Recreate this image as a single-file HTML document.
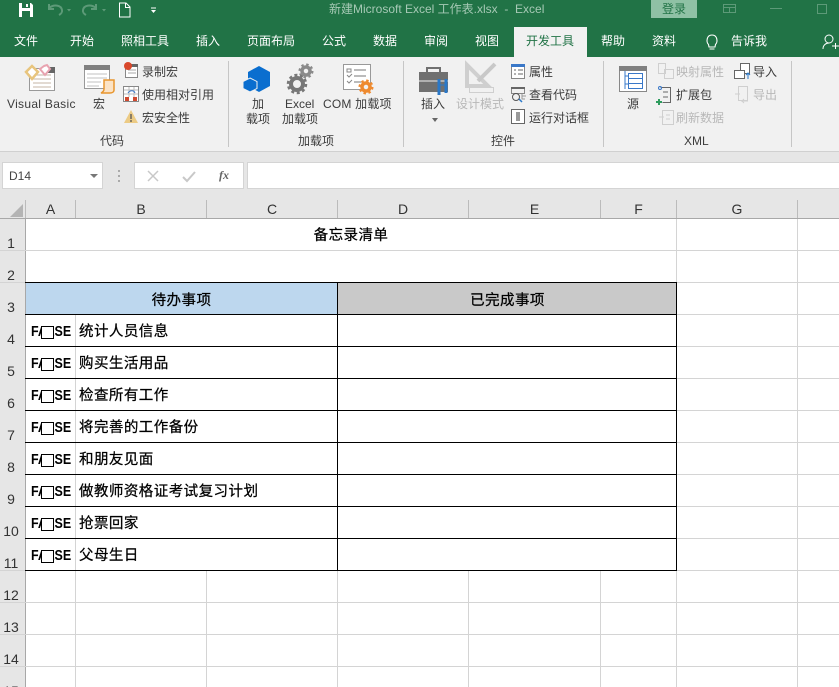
<!DOCTYPE html>
<html><head><meta charset="utf-8"><style>
html,body{margin:0;padding:0;background:#fff}
#p{position:relative;width:839px;height:687px;overflow:hidden;font-family:"Liberation Sans","Noto Sans CJK SC",sans-serif;background:#fff}
#p div{position:absolute;white-space:nowrap}
.t{font-size:12px;color:#3c3c3c;line-height:14px}
.tab{font-size:12px;color:#fff;top:33px;line-height:16px}
.g{color:#b8b8b8}
.h{color:#333;font-size:14px;text-align:center;line-height:17px;top:201px}
.rn{left:0;width:22px;font-size:14px;color:#333;text-align:center;line-height:16px}
.cb{font-size:14.5px;letter-spacing:.45px;color:#000;line-height:18px;-webkit-text-stroke:.25px #000}
.f{font-size:14.67px;font-weight:bold;color:#000;line-height:18px;left:31px;transform:scaleX(.85);transform-origin:0 0}
.bx{left:41px;width:11px;height:11px;border:1px solid #000;background:#fff}
.lb{height:1px;background:#000;left:25px;width:652px}
.lv{width:1px;background:#000;top:282px;height:289px}
.gl{background:#d4d4d4}
.tk{background:#bbb;width:1px;top:200px;height:18px}
.hl{left:677px;width:162px;height:1px;background:#d4d4d4}
.sep{width:1px;background:#c6c6c6;top:61px;height:86px}
</style></head><body><div id="p">
<div style="left:0;top:0;width:839px;height:57px;background:#217346"></div>
<div style="left:0;top:57px;width:839px;height:94px;background:#f1f1f1"></div>
<div style="left:0;top:151px;width:839px;height:67px;background:#e6e6e6"></div>

<svg style="position:absolute;left:0;top:0" width="200" height="22"><path d="M19 3h12l2 2v12H19z" fill="#fff"/><rect x="22" y="3" width="8" height="5" fill="#217346"/><rect x="22" y="11" width="8" height="6" fill="#217346"/><rect x="26" y="4" width="2" height="3" fill="#fff"/><g fill="none" stroke="#5d9a78" stroke-width="2"><path d="M49 4v5h5M49 8c5-4 12-3 13 2 .5 2-1 4-3 5"/><path d="M96 4v5h-5M96 8c-5-4-12-3-13 2-.5 2 1 4 3 5"/></g><path d="M67 9h4l-2 2.500zM102 9h4l-2 2.500z" fill="#5d9a78"/><path d="M119.500 3h6.500l4 4v10h-10.500z M125.500 3v4.500h4.500" fill="none" stroke="#fff"/><path d="M151 8h5" stroke="#fff"/><path d="M151 10h5l-2.500 3z" fill="#fff"/></svg>
<div style="left:329px;top:1px;font-size:12px;line-height:16px;color:#a6c9b5">新建Microsoft Excel 工作表.xlsx&nbsp; -&nbsp; Excel</div>
<div style="left:651px;top:0;width:46px;height:18px;background:#8fc1a5;color:#217346;font-size:12px;text-align:center;line-height:18px">登录</div>
<svg style="position:absolute;left:720px;top:0" width="119" height="20"><g fill="none" stroke="#5d9a78"><rect x="3.500" y="4.500" width="12" height="8"/><path d="M3 7.500h13M9.500 7.500v5M50 8.500h12"/><rect x="97.500" y="4.500" width="9" height="9"/></g></svg>

<div class="tab" style="left:14px">文件</div>
<div class="tab" style="left:70px">开始</div>
<div class="tab" style="left:121px">照相工具</div>
<div class="tab" style="left:196px">插入</div>
<div class="tab" style="left:247px">页面布局</div>
<div class="tab" style="left:322px">公式</div>
<div class="tab" style="left:373px">数据</div>
<div class="tab" style="left:424px">审阅</div>
<div class="tab" style="left:475px">视图</div>
<div style="left:514px;top:27px;width:73px;height:30px;background:#f1f1f1"></div>
<div class="tab" style="left:526px;color:#217346">开发工具</div>
<div class="tab" style="left:601px">帮助</div>
<div class="tab" style="left:652px">资料</div>
<svg style="position:absolute;left:703px;top:32px" width="18" height="20"><path d="M5.500 12.500C3 10 3.500 3 9 3s6 7 3.500 9.500L12 15H6zM6.500 17h5" fill="none" stroke="#fff" stroke-width="1.100"/></svg>
<div class="tab" style="left:731px">告诉我</div>
<svg style="position:absolute;left:822px;top:33px" width="17" height="18"><circle cx="7" cy="6" r="4" fill="none" stroke="#fff"/><path d="M1 16c0-4 3-6 6-6M10 13h7M13.500 10v6" fill="none" stroke="#fff"/></svg>

<svg style="position:absolute;left:0;top:57px" width="839" height="75" fill="none">
<rect x="29.500" y="11.500" width="25" height="22" fill="#fff" stroke="#999"/><path d="M33 18h18M33 22h18M33 26h18M33 30h18" stroke="#c4b5a5"/><rect x="48" y="10" width="7" height="6" fill="#666"/>
<path d="M32 9l6 6-6 7-6-7z" fill="#fff" stroke="#e8c57e" stroke-width="2.500"/><path d="M44 9l3-1 3 4-5 6-5-6z" fill="#fff" stroke="#e8a3b0" stroke-width="2"/>
<rect x="84.500" y="8.500" width="25" height="23" fill="#fff" stroke="#999"/><rect x="84" y="8" width="26" height="5" fill="#808080"/><path d="M87 17h20M87 21h20M87 25h14M87 29h12" stroke="#c0c0c0"/><path d="M104 23h10v10c0 2-2 3-4 3h-9c2-1 3-2 3-4z" fill="#fbe3c6" stroke="#e8962f" stroke-width="1.500"/>
<rect x="125.500" y="7.500" width="12" height="13" fill="#fff" stroke="#888"/><rect x="128" y="7" width="10" height="3" fill="#666"/><path d="M128 13h8M128 16h8" stroke="#aaa"/><circle cx="128" cy="9" r="4" fill="#d9482b"/>
<rect x="123.500" y="29.500" width="15" height="15" fill="#fff" stroke="#888"/><path d="M124 33h14M124 37h14M129 30v10M134 30v10" stroke="#bbb"/><path d="M128 36c2-3 6-3 7 0" stroke="#3a78c8"/><rect x="125" y="40" width="12" height="4" fill="#d04a30"/><rect x="129" y="40" width="4" height="4" fill="#fff"/>
<path d="M131 53l7 13h-14z" fill="#eccb85"/><path d="M131 57v5M131 63v2" stroke="#555" stroke-width="1.300"/>
<path d="M259 9l11 6v14l-11 6-11-6V15z" fill="#0a6ecf"/><path d="M250 21l7 3.500v7l-7 3.500-7-3.500v-7z" fill="#0a6ecf" stroke="#f1f1f1"/>
<circle cx="306" cy="14" r="4" stroke="#8a8a8a" stroke-width="3.500"/><circle cx="306" cy="14" r="6.500" stroke="#8a8a8a" stroke-width="2" stroke-dasharray="2.500 2.600"/>
<circle cx="297" cy="27" r="6" stroke="#777" stroke-width="4"/><circle cx="297" cy="27" r="9" stroke="#777" stroke-width="2.500" stroke-dasharray="3 2.650"/>
<rect x="343.500" y="7.500" width="27" height="25" fill="#fff" stroke="#999"/><path d="M354 13h12M354 19h12M354 25h8" stroke="#777"/><path d="M347 12h4v3h-4zM347 18l2 2 3-3M347 24l2 2 3-3" stroke="#888"/>
<circle cx="366" cy="30" r="4" fill="#f1f1f1" stroke="#ee8a2f" stroke-width="3.500"/><circle cx="366" cy="30" r="6.500" stroke="#ee8a2f" stroke-width="2" stroke-dasharray="2.500 2.600"/>
<path d="M419 15h29v20h-29z" fill="#707070"/><path d="M427 15v-4h13v4" stroke="#707070" stroke-width="2"/><path d="M419 24h29" stroke="#f1f1f1"/>
<path d="M439 22v16M446 22v14" stroke="#2a78c8" stroke-width="3"/><path d="M439 28h7" stroke="#2a78c8"/>
<path d="M467 8v21h21z" stroke="#cfcfcf" stroke-width="4"/><path d="M478 24l17-17" stroke="#c8c8c8" stroke-width="4"/><rect x="469.500" y="30.500" width="24" height="5" stroke="#cfcfcf"/>
<rect x="511.500" y="7.500" width="13" height="14" fill="#fff" stroke="#888"/><rect x="511" y="7" width="14" height="3" fill="#3a78c8"/><path d="M514 13h2M518 13h5M514 17h2M518 17h5" stroke="#666"/>
<rect x="511.500" y="30.500" width="13" height="6" stroke="#888"/><rect x="511" y="30" width="14" height="2" fill="#666"/><circle cx="516" cy="40" r="3.500" stroke="#555"/><path d="M519 42l3 3" stroke="#2a78c8" stroke-width="1.500"/><path d="M522 37v5h3M522 39h4" stroke="#999"/>
<rect x="511.500" y="52.500" width="13" height="14" fill="#fff" stroke="#666"/><rect x="516" y="55" width="4" height="9" fill="#999"/>
<rect x="619.500" y="9.500" width="27" height="25" fill="#fff" stroke="#888"/><rect x="619" y="9" width="28" height="5" fill="#808080"/><path d="M625 14v18M625 19h3M625 27h3" stroke="#3a78c8"/><rect x="628.500" y="16.500" width="14" height="5" stroke="#3a78c8"/><rect x="628.500" y="21.500" width="14" height="5" stroke="#3a78c8"/><rect x="628.500" y="26.500" width="14" height="5" stroke="#3a78c8"/>
<g stroke="#cfcfcf"><rect x="658.500" y="6.500" width="7" height="10"/><rect x="664.500" y="12.500" width="9" height="9"/><path d="M662.500 53.500h11v14h-11zM659 60h5M666 58h4M666 62h4"/><path d="M738.500 29.500h9v14h-9zM735 37h5M748 44h-6l2-2M742 44l2 2"/></g>
<path d="M660.500 30.500h10v15h-8M663 35h5M663 40h5" stroke="#666"/><circle cx="660" cy="31" r="1.500" stroke="#3a78c8"/><path d="M656 45h6M659 42v6" stroke="#2e9c5e" stroke-width="2"/>
<rect x="740.500" y="6.500" width="9" height="10" fill="#fff" stroke="#666"/><rect x="734.500" y="13.500" width="10" height="8" fill="#fff" stroke="#666"/><path d="M748 22v-6M746 18l2-2 2 2" stroke="#2a78c8"/>
</svg>

<div class="t" style="left:7px;top:97px;letter-spacing:.3px">Visual Basic</div>
<div class="t" style="left:93px;top:97px">宏</div>
<div class="t" style="left:142px;top:65px">录制宏</div>
<div class="t" style="left:142px;top:88px">使用相对引用</div>
<div class="t" style="left:142px;top:111px">宏安全性</div>
<div class="t" style="left:100px;top:134px">代码</div>
<div class="t" style="left:252px;top:97px">加</div>
<div class="t" style="left:246px;top:112px">载项</div>
<div class="t" style="left:285px;top:97px">Excel</div>
<div class="t" style="left:282px;top:112px">加载项</div>
<div class="t" style="left:323px;top:97px;letter-spacing:.2px">COM 加载项</div>
<div class="t" style="left:298px;top:134px">加载项</div>
<div class="t" style="left:421px;top:97px">插入</div>
<div style="left:432px;top:118px;width:0;height:0;border:3px solid transparent;border-top:4px solid #666"></div>
<div class="t g" style="left:456px;top:97px">设计模式</div>
<div class="t" style="left:529px;top:65px">属性</div>
<div class="t" style="left:529px;top:88px">查看代码</div>
<div class="t" style="left:529px;top:111px">运行对话框</div>
<div class="t" style="left:491px;top:134px">控件</div>
<div class="t" style="left:627px;top:97px">源</div>
<div class="t g" style="left:676px;top:65px">映射属性</div>
<div class="t" style="left:676px;top:88px">扩展包</div>
<div class="t g" style="left:676px;top:111px">刷新数据</div>
<div class="t" style="left:753px;top:65px">导入</div>
<div class="t g" style="left:753px;top:88px">导出</div>
<div class="t" style="left:684px;top:134px">XML</div>
<div class="sep" style="left:228px"></div>
<div class="sep" style="left:403px"></div>
<div class="sep" style="left:603px"></div>
<div class="sep" style="left:791px"></div>

<div style="left:0;top:151px;width:839px;height:1px;background:#d0d0d0"></div>
<div style="left:2px;top:162px;width:101px;height:27px;background:#fff;border:1px solid #d4d4d4;box-sizing:border-box;font-size:12px;line-height:26px;color:#444;padding-left:6px">D14</div>
<div style="left:90px;top:174px;width:0;height:0;border:4px solid transparent;border-top:4px solid #777"></div>
<div style="left:118px;top:170px;width:2px;height:2px;background:#aaa;box-shadow:0 5px #aaa,0 10px #aaa"></div>
<div style="left:134px;top:162px;width:110px;height:27px;background:#fff;border:1px solid #d4d4d4;box-sizing:border-box"></div>
<svg style="position:absolute;left:140px;top:165px" width="100" height="22"><path d="M8 6l10 10M18 6L8 16" stroke="#c8c8c8" stroke-width="1.500"/><path d="M43 12l4 4 8-9" stroke="#c8c8c8" stroke-width="2" fill="none"/></svg>
<div style="left:219px;top:167px;font:italic bold 12px 'Liberation Serif',serif;color:#666;line-height:16px">fx</div>
<div style="left:247px;top:162px;width:592px;height:27px;background:#fff;border:1px solid #d4d4d4;box-sizing:border-box;border-right:0"></div>

<div style="left:0;top:218px;width:25px;height:469px;background:#e6e6e6"></div>
<div style="left:25px;top:218px;width:1px;height:469px;background:#a8a8a8"></div>
<div style="left:0;top:218px;width:839px;height:1px;background:#a8a8a8"></div>
<svg style="position:absolute;left:9px;top:203px" width="16" height="15"><path d="M14 1v13H1z" fill="#b4b4b4"/></svg>
<div class="tk" style="left:25px"></div><div class="tk" style="left:75px"></div><div class="tk" style="left:206px"></div><div class="tk" style="left:337px"></div><div class="tk" style="left:468px"></div><div class="tk" style="left:600px"></div><div class="tk" style="left:676px"></div><div class="tk" style="left:797px"></div>
<div class="h" style="left:26px;width:49px">A</div>
<div class="h" style="left:76px;width:130px">B</div>
<div class="h" style="left:207px;width:130px">C</div>
<div class="h" style="left:338px;width:130px">D</div>
<div class="h" style="left:469px;width:131px">E</div>
<div class="h" style="left:601px;width:75px">F</div>
<div class="h" style="left:677px;width:120px">G</div>

<div class="rn" style="top:235px">1</div><div class="rn" style="top:267px">2</div><div class="rn" style="top:299px">3</div><div class="rn" style="top:331px">4</div><div class="rn" style="top:363px">5</div><div class="rn" style="top:395px">6</div><div class="rn" style="top:427px">7</div><div class="rn" style="top:459px">8</div><div class="rn" style="top:491px">9</div><div class="rn" style="top:523px">10</div><div class="rn" style="top:555px">11</div><div class="rn" style="top:587px">12</div><div class="rn" style="top:619px">13</div><div class="rn" style="top:651px">14</div><div class="rn" style="top:683px">15</div>

<div class="gl" style="left:0;top:250px;width:839px;height:1px"></div>
<div class="gl" style="left:0;top:282px;width:839px;height:1px"></div>
<div class="hl" style="top:314px"></div><div class="hl" style="top:346px"></div><div class="hl" style="top:378px"></div><div class="hl" style="top:410px"></div><div class="hl" style="top:442px"></div><div class="hl" style="top:474px"></div><div class="hl" style="top:506px"></div><div class="hl" style="top:538px"></div>
<div class="gl" style="left:0;top:570px;width:839px;height:1px"></div>
<div class="gl" style="left:0;top:602px;width:839px;height:1px"></div>
<div class="gl" style="left:0;top:634px;width:839px;height:1px"></div>
<div class="gl" style="left:0;top:666px;width:839px;height:1px"></div>
<div class="gl" style="left:75px;top:314px;width:1px;height:373px"></div>
<div class="gl" style="left:206px;top:570px;width:1px;height:117px"></div>
<div class="gl" style="left:337px;top:570px;width:1px;height:117px"></div>
<div class="gl" style="left:468px;top:570px;width:1px;height:117px"></div>
<div class="gl" style="left:600px;top:570px;width:1px;height:117px"></div>
<div class="gl" style="left:676px;top:219px;width:1px;height:468px"></div>
<div class="gl" style="left:797px;top:219px;width:1px;height:468px"></div>

<div class="cb" style="left:26px;top:227px;width:650px;text-align:center">备忘录清单</div>
<div style="left:26px;top:283px;width:311px;height:31px;background:#bdd7ee"></div>
<div style="left:338px;top:283px;width:338px;height:31px;background:#c9c9c9"></div>
<div class="cb" style="left:26px;top:292px;width:311px;text-align:center">待办事项</div>
<div class="cb" style="left:338px;top:292px;width:339px;text-align:center">已完成事项</div>

<div class="lb" style="top:282px"></div><div class="lb" style="top:314px"></div><div class="lb" style="top:346px"></div><div class="lb" style="top:378px"></div><div class="lb" style="top:410px"></div><div class="lb" style="top:442px"></div><div class="lb" style="top:474px"></div><div class="lb" style="top:506px"></div><div class="lb" style="top:538px"></div><div class="lb" style="top:570px"></div>
<div class="lv" style="left:337px"></div>
<div class="lv" style="left:676px"></div>

<div class="f" style="top:323px">FALSE</div><div class="cb" style="left:79px;top:323px">统计人员信息</div>
<div class="f" style="top:355px">FALSE</div><div class="cb" style="left:79px;top:355px">购买生活用品</div>
<div class="f" style="top:387px">FALSE</div><div class="cb" style="left:79px;top:387px">检查所有工作</div>
<div class="f" style="top:419px">FALSE</div><div class="cb" style="left:79px;top:419px">将完善的工作备份</div>
<div class="f" style="top:451px">FALSE</div><div class="cb" style="left:79px;top:451px">和朋友见面</div>
<div class="f" style="top:483px">FALSE</div><div class="cb" style="left:79px;top:483px">做教师资格证考试复习计划</div>
<div class="f" style="top:515px">FALSE</div><div class="cb" style="left:79px;top:515px">抢票回家</div>
<div class="f" style="top:547px">FALSE</div><div class="cb" style="left:79px;top:547px">父母生日</div>

<div class="bx" style="top:326px"></div>
<div class="bx" style="top:358px"></div>
<div class="bx" style="top:390px"></div>
<div class="bx" style="top:422px"></div>
<div class="bx" style="top:454px"></div>
<div class="bx" style="top:486px"></div>
<div class="bx" style="top:518px"></div>
<div class="bx" style="top:550px"></div>
</div></body></html>
